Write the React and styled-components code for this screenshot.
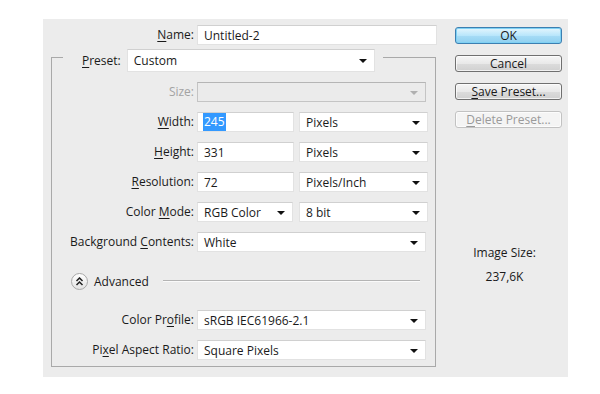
import React from "react";
import styled, { createGlobalStyle } from "styled-components";

const Global = createGlobalStyle`
  body {
    margin: 0;
    background: #ffffff;
    font-family: "Open Sans", "Liberation Sans", sans-serif;
    font-size: 12px;
    color: #1a1a1a;
  }
`;

const Dialog = styled.div`
  margin: 19px 0 0 43px;
  width: 525px;
  height: 358px;
  background: #ececec;
  display: flex;
  box-sizing: border-box;
`;

const FormColumn = styled.div`
  width: 397px;
  padding-top: 6px;
`;

const NameRow = styled.div`
  display: grid;
  grid-template-columns: 151px 240px;
  column-gap: 3px;
  align-items: center;
`;

const Label = styled.label`
  text-align: right;
  white-space: nowrap;
  color: ${(p) => (p.disabled ? "#a3a3a3" : "#1a1a1a")};
  line-height: 20px;
`;

const Key = styled.span`
  text-decoration: underline;
  text-underline-offset: 2px;
`;

const Field = styled.div`
  height: ${(p) => p.h || 20}px;
  box-sizing: border-box;
  background: ${(p) => (p.disabled ? "#ebebeb" : "#ffffff")};
  border: 1px solid ${(p) => (p.disabled ? "#c4c4c4" : "#e2e2e2")};
  border-top-color: ${(p) => (p.disabled ? "#b5b5b5" : "#d0d0d0")};
  display: flex;
  align-items: center;
  padding: 0 6px;
  white-space: nowrap;
  overflow: hidden;
`;

const Select = styled(Field)`
  justify-content: space-between;
  padding-right: 7px;
`;

const Arrow = styled.span`
  width: 0;
  height: 0;
  border-left: 4px solid transparent;
  border-right: 4px solid transparent;
  border-top: 4px solid ${(p) => (p.disabled ? "#b0b0b0" : "#111")};
  margin-top: 1px;
`;

const Selected = styled.span`
  background: #3399ff;
  color: #fff;
  padding: 0 1px;
  margin-left: -1px;
  line-height: 18px;
`;

const Group = styled.fieldset`
  margin: -2px 0 0 8px;
  width: 385px;
  box-sizing: border-box;
  border: 1px solid #a9a9a9;
  padding: 0 7px 6px 0;
`;

const Legend = styled.legend`
  margin-left: 11px;
  padding: 6px 8px 0 19px;
  display: flex;
  align-items: center;
  gap: 6px;
`;

const Rows = styled.div`
  display: grid;
  grid-template-columns: 142px 97px 129px;
  column-gap: 3px;
  row-gap: 10px;
  margin-top: 10px;
  align-items: center;
`;

const Wide = styled.div`
  grid-column: span 2;
`;

const Pair = styled.div`
  grid-column: span 2;
  display: grid;
  grid-template-columns: 96px 129px;
  column-gap: 6px;
`;

const Split = styled.div`
  grid-column: span 2;
  display: grid;
  grid-template-columns: 97px 129px;
  column-gap: 5px;
`;

const AdvancedRow = styled.div`
  grid-column: 1 / -1;
  display: flex;
  align-items: center;
  height: 20px;
  margin: 9px 0 9px 19px;
  gap: 6px;
`;

const Rule = styled.div`
  flex: 1;
  height: 1px;
  background: #b4b4b4;
  border-bottom: 1px solid #fafafa;
  margin-left: 8px;
  margin-right: 6px;
`;

const RoundButton = styled.span`
  width: 15px;
  height: 15px;
  border-radius: 50%;
  border: 1px solid #a8a8a8;
  background: linear-gradient(#ffffff, #e3e3e3);
  display: flex;
  align-items: center;
  justify-content: center;
`;

const SideColumn = styled.div`
  margin-left: 15px;
  padding-top: 8px;
  display: flex;
  flex-direction: column;
  align-items: center;
  width: 107px;
`;

const Button = styled.div`
  width: 107px;
  height: 17px;
  box-sizing: border-box;
  border-radius: 3px;
  margin-bottom: 11px;
  display: flex;
  align-items: center;
  justify-content: center;
  border: 1px solid ${(p) => (p.primary ? "#3c7fb1" : p.disabled ? "#c2c2c2" : "#707070")};
  background: ${(p) =>
    p.primary
      ? "linear-gradient(#e5f6fd 0%, #b9e6fb 50%, #a7dcf6 51%, #8fd0f0 100%)"
      : p.disabled
      ? "#f4f4f4"
      : "linear-gradient(#f6f6f6 0%, #e9e9e9 50%, #dcdcdc 51%, #d0d0d0 100%)"};
  color: ${(p) => (p.disabled ? "#9a9a9a" : "#1a1a1a")};
  box-shadow: ${(p) => (p.primary ? "inset 0 0 0 1px #7fd1f4" : "inset 0 0 0 1px rgba(255,255,255,0.7)")};
`;

const SizeInfo = styled.div`
  margin-top: 102px;
  text-align: center;
  line-height: 24px;
  margin-left: -8px;
`;

const Chevrons = () => (
  <svg width="9" height="9" viewBox="0 0 9 9">
    <path d="M1.5 4 L4.5 1 L7.5 4 M1.5 8 L4.5 5 L7.5 8" fill="none" stroke="#222" strokeWidth="1.5" />
  </svg>
);

const App = () => {
  return (
    <>
      <Global />
      <Dialog>
        <FormColumn>
          <NameRow>
            <Label><Key>N</Key>ame:</Label>
            <Field>Untitled-2</Field>
          </NameRow>
          <Group>
            <Legend>
              <Label><Key>P</Key>reset:</Label>
              <Select h={23} style={{ width: 248 }}>
                Custom <Arrow />
              </Select>
            </Legend>
            <Rows>
              <Label disabled>Size:</Label>
              <Wide>
                <Select disabled>
                  <span /> <Arrow disabled />
                </Select>
              </Wide>

              <Label><Key>W</Key>idth:</Label>
              <Split>
                <Field><Selected>245</Selected></Field>
                <Select>Pixels <Arrow /></Select>
              </Split>

              <Label><Key>H</Key>eight:</Label>
              <Split>
                <Field>331</Field>
                <Select>Pixels <Arrow /></Select>
              </Split>

              <Label><Key>R</Key>esolution:</Label>
              <Split>
                <Field>72</Field>
                <Select>Pixels/Inch <Arrow /></Select>
              </Split>

              <Label>Color <Key>M</Key>ode:</Label>
              <Pair>
                <Select>RGB Color <Arrow /></Select>
                <Select>8 bit <Arrow /></Select>
              </Pair>

              <Label>Background <Key>C</Key>ontents:</Label>
              <Wide>
                <Select>White <Arrow /></Select>
              </Wide>

              <AdvancedRow>
                <RoundButton><Chevrons /></RoundButton>
                Advanced
                <Rule />
              </AdvancedRow>

              <Label>Color Pr<Key>o</Key>file:</Label>
              <Wide>
                <Select>sRGB IEC61966-2.1 <Arrow /></Select>
              </Wide>

              <Label>Pi<Key>x</Key>el Aspect Ratio:</Label>
              <Wide>
                <Select>Square Pixels <Arrow /></Select>
              </Wide>
            </Rows>
          </Group>
        </FormColumn>
        <SideColumn>
          <Button primary>OK</Button>
          <Button>Cancel</Button>
          <Button><span><Key>S</Key>ave Preset...</span></Button>
          <Button disabled><span><Key>D</Key>elete Preset...</span></Button>
          <SizeInfo>
            Image Size:
            <br />
            237,6K
          </SizeInfo>
        </SideColumn>
      </Dialog>
    </>
  );
};

export default App;
